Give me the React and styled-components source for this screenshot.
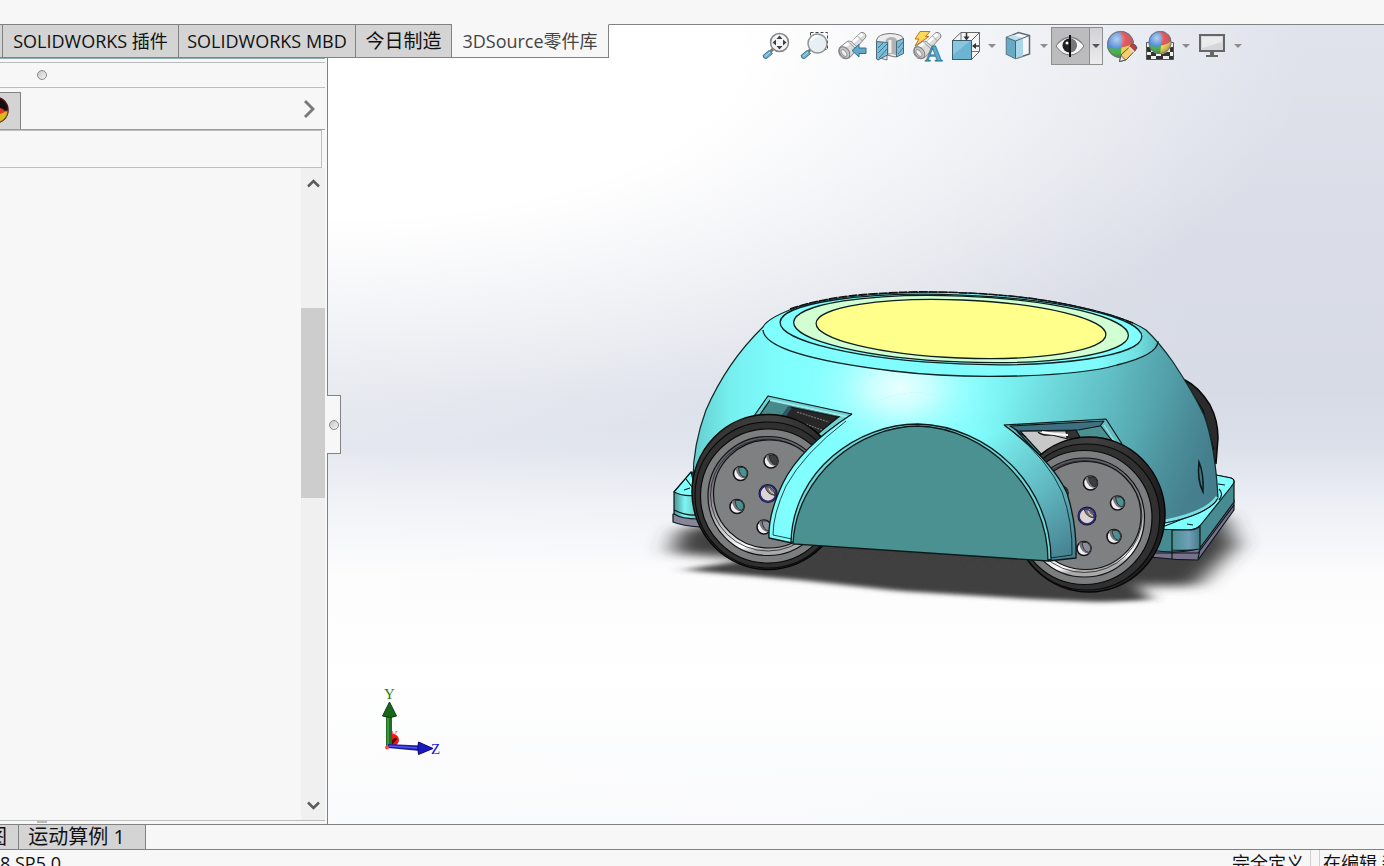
import React from 'react';
import styled, { createGlobalStyle } from 'styled-components';

const Global = createGlobalStyle`
  * { box-sizing: border-box; }
  body { margin: 0; background: #f7f7f7; overflow: hidden; }
  body, button { font-family: "Open Sans", "Noto Sans CJK SC", sans-serif; color: #111; }
  button { border: 0; padding: 0; background: none; cursor: pointer; }
  svg { display: block; }
`;

const Shell = styled.div`
  height: 100vh;
  display: grid;
  grid-template-rows: 24px minmax(0, 1fr) 26px 16px;
  overflow: hidden;
`;

const MenuStrip = styled.header`
  background: #f7f7f7;
`;

const Main = styled.main`
  display: grid;
  grid-template-columns: 328px minmax(0, 1fr);
  grid-template-rows: 34px minmax(0, 1fr);
  min-height: 0;
`;

/* ---------- command manager tabs ---------- */

const TabBar = styled.nav`
  grid-row: 1;
  grid-column: 1 / 3;
  justify-self: start;
  z-index: 2;
  display: flex;
`;

const Tab = styled.button`
  width: ${(p) => p.$width}px;
  border-style: solid;
  border-width: 1px 1px 1px 0;
  border-color: ${(p) => (p.$active ? '#f7f7f7' : '#828282')} #828282 #828282;
  background: ${(p) => (p.$active ? '#f7f7f7' : '#d4d4d4')};
  color: ${(p) => (p.$active ? '#444' : '#111')};
  font-size: ${(p) => (p.$large ? 19 : 18)}px;
  line-height: 32px;
  white-space: nowrap;
`;

/* ---------- side panel ---------- */

const Panel = styled.aside`
  grid-row: 2;
  grid-column: 1;
  display: flex;
  flex-direction: column;
  min-height: 0;
  padding-right: 2px;
  background: #f7f7f7;
  border-right: 1px solid #828282;
`;

const PanelTop = styled.div`
  height: 5px;
  border-top: 1px solid #8fb0b0;
  border-bottom: 1px solid #bdbdbd;
`;

const GripRow = styled.div`
  height: 25px;
  padding-left: 37px;
  display: flex;
  align-items: center;
  border-bottom: 1px solid #bdbdbd;
`;

const Grip = styled.span`
  width: 10px;
  height: 10px;
  border: 1px solid #8a8a8a;
  border-radius: 50%;
  background: linear-gradient(135deg, #c6c6c6, #f4f4f4);
`;

const ManagerTabs = styled.div`
  height: 42px;
  padding: 4px 10px 0 0;
  display: flex;
  justify-content: space-between;
  border-bottom: 1px solid #9c9c9c;
`;

const ManagerTab = styled.button`
  width: 21px;
  background: #d4d4d4;
  border: 1px solid #828282;
  border-width: 1px 1px 0 0;
  overflow: hidden;
`;

const FilterBox = styled.div`
  height: 38px;
  margin-right: 3px;
  border: 1px solid #bfbfbf;
  border-left: 0;
`;

const TreeArea = styled.div`
  flex: 1;
  min-height: 0;
  display: flex;
  justify-content: flex-end;
`;

const ScrollBar = styled.div`
  width: 24px;
  display: flex;
  flex-direction: column;
  background: #f0f0f0;
`;

const ScrollButton = styled.button`
  height: 30px;
  display: grid;
  place-items: center;
`;

const Track = styled.div`
  flex: 1;
  display: grid;
  grid-template-rows: 110fr 190fr 292fr;
`;

const Thumb = styled.div`
  grid-row: 2;
  background: #cdcdcd;
`;

const PanelBottom = styled.div`
  height: 4px;
  padding-left: 37px;
  border-top: 1px solid #bdbdbd;
`;

const BottomGrip = styled.div`
  width: 10px;
  height: 2px;
  background: #bcbcbc;
`;

/* ---------- graphics area ---------- */

const Canvas = styled.section`
  grid-row: 1 / 3;
  grid-column: 2;
  position: relative;
  display: grid;
  min-height: 0;
  border-top: 1px solid #828282;
  background:
    radial-gradient(ellipse 980px 390px at 0 30px, #fff 42%, rgba(255, 255, 255, 0.6) 66%, rgba(255, 255, 255, 0) 100%),
    linear-gradient(90deg, rgba(255, 255, 255, 0.25), rgba(255, 255, 255, 0) 85%),
    linear-gradient(180deg, #e0e3ec 0%, #dadde7 28%, #d7dbe6 46%, #dce0ea 53%, #edeff5 60%, #fcfcfd 69%, #ffffff 82%, #f8f9fb 100%);
`;

const Scene = styled.svg`
  grid-area: 1 / 1;
  width: 100%;
  height: 100%;
  min-height: 0;
`;

const ViewTools = styled.div`
  grid-area: 1 / 1;
  z-index: 1;
  align-self: start;
  justify-self: end;
  margin: 2px 139px 0 0;
  display: flex;
  height: 38px;
`;

const Tool = styled.button`
  width: 38px;
  height: 38px;
`;

const Caret = styled.button`
  width: 14px;
  display: grid;
  place-items: center;
  color: #8c8c8c;
`;

const PressedTool = styled.div`
  width: 52px;
  display: flex;
  border: 1px solid #8e8e8e;
  background: #bcbcbe;
  overflow: hidden;
  & > ${Tool} { height: 36px; border-right: 1px solid #8e8e8e; }
  & > ${Caret} { width: 12px; color: #555; background: linear-gradient(#d2d2d6, #ececef); }
`;

const Triad = styled.svg`
  grid-area: 1 / 1;
  align-self: end;
  justify-self: start;
  margin: 0 0 64px 50px;
`;

const FlyoutHandle = styled.button`
  position: absolute;
  left: -1px;
  top: 370px;
  width: 14px;
  height: 59px;
  display: grid;
  place-items: center;
  background: #f7f7f7;
  border: 1px solid #828282;
  border-left: 0;
`;

/* ---------- bottom bars ---------- */

const StudyBar = styled.nav`
  display: flex;
  border-top: 1px solid #828282;
  border-bottom: 1px solid #828282;
  background: #f7f7f7;
`;

const StudyTab = styled.button`
  display: flex;
  justify-content: flex-end;
  align-items: center;
  width: ${(p) => p.$width}px;
  padding-right: ${(p) => p.$pad}px;
  border-right: 1px solid #828282;
  background: #d4d4d4;
  font-size: 20px;
  line-height: 22px;
  white-space: nowrap;
  overflow: hidden;
`;

const StatusBar = styled.footer`
  display: flex;
  align-items: flex-start;
  overflow: hidden;
  background: #f7f7f7;
  font-size: 18px;
  line-height: 26px;
  white-space: nowrap;
`;

const Version = styled.span`
  flex: 1;
`;

const StatusCell = styled.span`
  flex: none;
  padding: ${(p) => (p.$last ? '0 0 0 3px' : '0 8px 0 0')};
  width: ${(p) => (p.$last ? 65 : 79)}px;
  margin-right: ${(p) => (p.$last ? 0 : 8)}px;
  border: 0 solid #cfcfcf;
  border-width: ${(p) => (p.$last ? '0 0 0 1px' : '0 1px 0 0')};
`;

/* ---------- icons ---------- */

const Icon = ({ x, children }) => (
  <svg width="38" height="38" viewBox={`${x} 27 38 38`} fill="none" aria-hidden="true">{children}</svg>
);

const CaretIcon = () => (
  <svg width="8" height="4" viewBox="0 0 8 4" aria-hidden="true"><path d="M0 0h8L4 4z" fill="currentColor" /></svg>
);

const Handle = ({ dx = 0 }) => (
  <g transform={`translate(${dx} 0)`}>
    <path d="M763 55.500 769 50.500 772.500 53.500 766.500 58.500Q763.500 59 763 55.500Z" fill="#6fb0cc" stroke="#3b7089" />
    <path d="M765 56.500 770 52" stroke="#b9e0ee" />
    <path d="m770.500 51.500 3-3" stroke="#777" strokeWidth="3" />
  </g>
);

const Tube = ({ dx = 0 }) => (
  <g transform={`translate(${dx} 0)`}>
    <path d="M839.500 47.500 848 41 851.500 41.500 861 32.500Q866 32 866 37L857 47 856.500 50 850 57.500Q846 60 842.500 58 837 54 839.500 47.500Z" fill="#dcdcdc" stroke="#858585" />
    <path d="m844 46.500 6-4M853 42l9.500-8" stroke="#fff" strokeWidth="3" />
    <path d="m848 41.500 8.500 8M851.500 42l6 5M857.500 36l5 5" stroke="#999" />
    <ellipse cx="844.500" cy="52.500" rx="4.500" ry="6.500" transform="rotate(-38 844.500 52.500)" fill="#c6c6c6" stroke="#7d7d7d" />
    <ellipse cx="844" cy="53" rx="2" ry="4" transform="rotate(-38 844 53)" fill="#f0f0f0" stroke="#949494" />
  </g>
);

const Ball = ({ id, cx, cy, r }) => (
  <g>
    <defs>
      <clipPath id={`${id}-clip`}><circle cx={cx} cy={cy} r={r} /></clipPath>
      <radialGradient id={`${id}-shade`} cx="0.35" cy="0.3" r="0.75">
        <stop offset="0" stopColor="#fff" stopOpacity="0.6" />
        <stop offset="0.5" stopColor="#fff" stopOpacity="0.05" />
        <stop offset="1" stopColor="#000" stopOpacity="0.3" />
      </radialGradient>
    </defs>
    <g clipPath={`url(#${id}-clip)`}>
      <rect x={cx - r} y={cy - r} width={2 * r} height={2 * r} fill="#4a88d8" />
      <path d={`M${cx - 1} ${cy - r}Q${cx + 3} ${cy - 6} ${cx + 1} ${cy + 3}L${cx + r} ${cy + 2}V${cy - r}Z`} fill="#dc4d52" />
      <path d={`M${cx - r} ${cy + 2}Q${cx - 5} ${cy + 6} ${cx + 1} ${cy + 3}L${cx + 1} ${cy + r}H${cx - r}Z`} fill="#3fac42" />
      <path d={`M${cx + 1} ${cy + 3}Q${cx + 8} ${cy + 2} ${cx + r} ${cy - 2}V${cy + r}H${cx}Z`} fill="#f0d14c" />
    </g>
    <circle cx={cx} cy={cy} r={r - 0.5} fill={`url(#${id}-shade)`} stroke="#77757c" />
  </g>
);

const ZoomFitIcon = () => (
  <Icon x={757}>
    <Handle />
    <circle cx="779.500" cy="42.500" r="9" fill="#f3f5f6" stroke="#858585" strokeWidth="1.500" />
    <path d="m779.500 35.500 3 3.500h-6zM779.500 49.500l3-3.500h-6zM772.500 42.500l3.500-3v6zM786.500 42.500l-3.500-3v6z" fill="#404040" />
  </Icon>
);

const ZoomAreaIcon = () => (
  <Icon x={795}>
    <path d="M810.500 32.500h17v17h-17z" stroke="#444" strokeDasharray="3 2" />
    <Handle dx={38} />
    <circle cx="817.500" cy="43.500" r="9.500" fill="#e6eff3" stroke="#929292" strokeWidth="1.500" />
    <path d="M811 41a7 7 0 0 1 7-5" stroke="#fff" strokeWidth="2" />
  </Icon>
);

const PreviousViewIcon = () => (
  <Icon x={833}>
    <Tube />
    <path d="M852 50.500 859 44.500v3.500h7v5.500h-7V57z" fill="#62a9c9" stroke="#32708c" />
  </Icon>
);

const SectionIcon = () => (
  <Icon x={871}>
    <path d="M876.500 40Q878 34 890 33.500 902 34 903.500 38.500L903.500 53 895 57 887 55 887 60 876.500 57Z" fill="#ececec" stroke="#777" />
    <path d="M887 43Q884 39 890 37.500 896 37 897 41V55Q891 52 887 55Z" fill="#b2b2b2" stroke="#999" strokeWidth=".5" />
    <path d="M890 40v13" stroke="#f0f0f0" strokeWidth="3" />
    <path d="M876.500 41.500 887.500 42.500V55L878 60 876.500 59Z" fill="#7cbcd8" stroke="#4a6878" />
    <path d="M896.500 41.500 903.500 38.500V53.500L896.500 57Z" fill="#7cbcd8" stroke="#4a6878" />
    <path d="m878 48 5-5M878 53l9-9M879 58l8-9M898 48l5-6M898 54l5-6" stroke="#3b7894" />
  </Icon>
);

const AnnotationViewIcon = () => (
  <Icon x={909}>
    <Tube dx={75} />
    <path d="M920 31.500h10l-4.500 5h3.500L915 46l4-7h-4z" fill="#ffd95c" stroke="#c5702a" />
    <text x="925" y="61" fontFamily="Liberation Serif, serif" fontWeight="700" fontSize="24" fill="#5fabcb" stroke="#2f7698" strokeWidth="0.800">A</text>
  </Icon>
);

const OrientationIcon = () => (
  <Icon x={947}>
    <path d="M952.500 40.500 961 32.500H979.500L971.500 40.500ZM971.500 59.500 979.500 51.500V32.500L971.500 40.500Z" fill="#f4f5f8" stroke="#666" />
    <path d="M961 32.500v8M972 51.500h8" stroke="#777" />
    <rect x="952.500" y="40.500" width="19" height="19" fill="#6db4d2" stroke="#3b5c6a" />
    <path d="m953 41 17 0-17 14z" fill="#9bd3e7" opacity=".6" />
    <path d="M966.500 33v5M979 46h-4" stroke="#333" strokeWidth="1.500" />
    <path d="M963.500 36.500h6l-3 4zM976 43v6l-4-3z" fill="#333" />
  </Icon>
);

const DisplayStyleIcon = () => (
  <Icon x={999}>
    <path d="M1006.500 37.500 1018.500 32.500 1029.500 35.500V54L1015.500 58.500 1006.500 54Z" fill="#f4f6f8" stroke="#5b6a72" strokeWidth="1.500" />
    <path d="M1006.500 37.500 1015.500 41V58.500L1006.500 54Z" fill="#68a9c5" />
    <path d="m1006.500 37.500 6-2.500 10 3-7 3z" fill="#b8e0ed" />
    <path d="M1015.500 41 1023 39V56L1015.500 58.500Z" fill="#a9d7e8" />
    <path d="M1006.500 37.500 1015.500 41 1029.500 35.500M1015.500 41V58.500" stroke="#47616d" />
  </Icon>
);

const EyeIcon = () => (
  <svg width="38" height="36" viewBox="1052 28 38 36" fill="none" aria-hidden="true">
    <path d="M1056 46Q1062 37 1070 37T1084 46Q1078 55 1070 55T1056 46Z" fill="#f5f5f5" stroke="#777" />
    <path d="M1058 43Q1070 32 1082 43" stroke="#888" strokeWidth="1.500" />
    <circle cx="1069.500" cy="45.500" r="7" fill="#222" />
    <path d="M1070 38.500a7 7 0 0 1 0 14z" fill="#777" />
    <circle cx="1067" cy="43" r="1.500" fill="#fff" />
    <path d="M1070 35v22" stroke="#111" strokeWidth="2" />
  </svg>
);

const AppearanceIcon = () => (
  <Icon x={1103}>
    <Ball id="appearance" cx={1120.500} cy={44.500} r={13.500} />
    <path d="M1119.500 61.500 1121 55 1130.500 46 1135 50.500 1126 60Z" fill="#f3cf70" stroke="#6c5226" />
    <path d="m1119.500 61.500 1.500-6 4.500 4.500z" fill="#eee" stroke="#555" />
    <path d="m1129 47 3-3q4 0 5 4l-3 4z" fill="#bc4038" stroke="#555" />
    <path d="m1129 47 5 5" stroke="#ddd" strokeWidth="2" />
  </Icon>
);

const SceneIcon = () => (
  <Icon x={1141}>
    <path d="M1146.500 42.500h27v17h-27z" fill="#333" stroke="#555" />
    <path d="M1147 43h6v4h-6zM1167 43h6v4h-6zM1151 48h5v4h-5zM1165 48h5v4h-5zM1147 52h4v3h-4zM1156 53h5v3h-5zM1170 52h3v4h-3zM1151 56h5v3h-5zM1163 56h6v3h-6z" fill="#f0f0f0" />
    <Ball id="backdrop" cx={1160} cy={42.500} r={11.500} />
  </Icon>
);

const MonitorIcon = () => (
  <Icon x={1193}>
    <rect x="1200" y="35" width="24" height="16" fill="#d6d7da" stroke="#666" strokeWidth="2" />
    <path d="M1202 37h20v5l-20 6z" fill="#f3f3f5" opacity=".7" />
    <path d="M1210 52h4v3h4v2h-12v-2h4z" fill="#666" />
  </Icon>
);

/* ---------- 3D model ---------- */

const bodyOutline = 'M763 327Q768 317 803 305 850 293 933 292 1015 293 1070 305 1125 316 1146 330 1158 341 1173 362 1193 392 1204 415 1215 445 1218 497 1214 512 1165 522L1070 540 780 540 693 480Q693 445 706 410 727 362 763 327Z';
const archOutline = 'M852 414Q800 448 783 483 768 514 769 538L792 543 1048 561 1076 558Q1077 525 1067 493 1052 460 1004 425 965 395 915 392 875 397 852 414Z';
const crownEdge = 'M763 330C764 347 810 361 893 371S1080 376 1117 365C1150 357 1158 348 1158 341';

const BodySurface = () => (
  <g>
    <path d={bodyOutline} fill="url(#body)" />
    <path d={bodyOutline} fill="url(#lower)" />
    <ellipse cx="900" cy="388" rx="118" ry="84" fill="url(#shine)" />
  </g>
);

const Hole = ({ x, y, inner = '#4b9191' }) => (
  <g>
    <circle cx={x} cy={y} r="7" fill="#f2edf3" stroke="#151515" strokeWidth="1.600" />
    <path d={`M${x - 5} ${y - 5}Q${x - 3} ${y + 5} ${x + 5} ${y + 5}Q${x + 10} ${y - 2} ${x + 3} ${y - 6}Q${x - 2} ${y - 8} ${x - 5} ${y - 5}Z`} fill="#77747c" />
    <path d={`M${x - 2} ${y - 6}Q${x - 1} ${y + 3} ${x + 5} ${y + 4}Q${x + 9} ${y - 2} ${x + 3} ${y - 6}Z`} fill={inner} stroke="#222" strokeWidth="0.800" />
  </g>
);

const Hub = ({ x, y }) => (
  <g>
    <circle cx={x} cy={y} r="8.500" fill="#ddd3d2" stroke="#111" strokeWidth="2" />
    <path d={`M${x - 3} ${y - 7}Q${x - 1} ${y + 1} ${x + 7} ${y + 2}Q${x + 7} ${y - 7} ${x - 3} ${y - 7}Z`} fill="#77706f" stroke="#222" strokeWidth="0.800" />
    <path d={`M${x + 1} ${y - 5}q1 4 5 5`} stroke="#ddd" fill="none" />
    <circle cx={x} cy={y} r="8" fill="none" stroke="#2c2e86" strokeWidth="1.600" />
  </g>
);

const Wheel = ({ x, y, tx, ty }) => (
  <g>
    <ellipse cx={tx} cy={ty} rx="76" ry="77.500" fill="url(#tire)" stroke="#050505" strokeWidth="1.500" />
    <ellipse cx={(x + tx) / 2} cy={(y + ty) / 2 + 1} rx="73" ry="73" fill="#303030" stroke="#0a0a0a" strokeWidth="1.200" />
    <ellipse cx={x} cy={y} rx="67.500" ry="67" fill="#7c7d7f" stroke="#0a0a0a" strokeWidth="1.200" />
    <ellipse cx={x} cy={y} rx="60" ry="59.500" fill="url(#rim)" stroke="#111" strokeWidth="1.200" />
    <ellipse cx={x} cy={y - 1} rx="57.500" ry="56" fill="none" stroke="#222" strokeWidth="0.800" />
    <ellipse cx={x + 1} cy={y - 2} rx="55.500" ry="54" fill="#7f8082" stroke="#111" strokeWidth="1.200" />
  </g>
);

const Robot = () => (
  <Scene viewBox="328 25 1056 799" preserveAspectRatio="xMidYMid meet" fill="none" role="img" aria-label="Robot assembly">
    <defs>
      <linearGradient id="body" x1="692" y1="0" x2="1218" y2="0" gradientUnits="userSpaceOnUse">
        <stop offset="0" stopColor="#64cccd" />
        <stop offset="0.070" stopColor="#76eeee" />
        <stop offset="0.180" stopColor="#80ffff" />
        <stop offset="0.520" stopColor="#80fdfd" />
        <stop offset="0.640" stopColor="#76e9ea" />
        <stop offset="0.800" stopColor="#67cfd2" />
        <stop offset="0.920" stopColor="#58b0b6" />
        <stop offset="1" stopColor="#4b929b" />
      </linearGradient>
      <linearGradient id="lower" x1="1020" y1="380" x2="1190" y2="500" gradientUnits="userSpaceOnUse">
        <stop offset="0" stopColor="#487f8c" stopOpacity="0" />
        <stop offset="0.600" stopColor="#437888" stopOpacity="0.350" />
        <stop offset="1" stopColor="#437888" stopOpacity="0.850" />
      </linearGradient>
      <linearGradient id="archShade" x1="1000" y1="430" x2="1068" y2="555" gradientUnits="userSpaceOnUse">
        <stop offset="0" stopColor="#4a8595" stopOpacity="0" />
        <stop offset="0.500" stopColor="#4a8595" stopOpacity="0.450" />
        <stop offset="1" stopColor="#457d8e" stopOpacity="0.950" />
      </linearGradient>
      <radialGradient id="shine">
        <stop offset="0" stopColor="#eaffff" />
        <stop offset="0.250" stopColor="#d6ffff" stopOpacity="0.850" />
        <stop offset="0.600" stopColor="#a8ffff" stopOpacity="0.400" />
        <stop offset="1" stopColor="#80ffff" stopOpacity="0" />
      </radialGradient>
      <linearGradient id="crown" x1="764" y1="0" x2="1158" y2="0" gradientUnits="userSpaceOnUse">
        <stop offset="0" stopColor="#80ffff" />
        <stop offset="0.850" stopColor="#80fbfb" />
        <stop offset="0.950" stopColor="#70dfe1" />
        <stop offset="1" stopColor="#5dbcc2" />
      </linearGradient>
      <linearGradient id="tire" x1="0" y1="0" x2="1" y2="0.300">
        <stop offset="0" stopColor="#303030" />
        <stop offset="0.500" stopColor="#404040" />
        <stop offset="1" stopColor="#1e1e20" />
      </linearGradient>
      <linearGradient id="rim" x1="0" y1="0" x2="0.200" y2="1">
        <stop offset="0" stopColor="#4f4e57" />
        <stop offset="0.500" stopColor="#88858e" />
        <stop offset="0.850" stopColor="#d8d8da" />
        <stop offset="0.950" stopColor="#ffffff" />
        <stop offset="1" stopColor="#aaaaaa" />
      </linearGradient>
      <linearGradient id="foot" x1="674" y1="0" x2="698" y2="0" gradientUnits="userSpaceOnUse">
        <stop offset="0" stopColor="#4a9292" />
        <stop offset="0.450" stopColor="#80f4f4" />
        <stop offset="1" stopColor="#5cc0c0" />
      </linearGradient>
      <linearGradient id="corner" x1="1172" y1="0" x2="1200" y2="0" gradientUnits="userSpaceOnUse">
        <stop offset="0" stopColor="#498f92" />
        <stop offset="0.600" stopColor="#6f9fb6" />
        <stop offset="1" stopColor="#437c86" />
      </linearGradient>
      <clipPath id="bodyClip"><path d={bodyOutline} /></clipPath>
      <clipPath id="archClip"><path d={archOutline} /></clipPath>
      <filter id="soft" x="-15%" y="-60%" width="130%" height="220%"><feGaussianBlur stdDeviation="13 5" /></filter>
      <filter id="edge" x="-10%" y="-40%" width="120%" height="180%"><feGaussianBlur stdDeviation="9 2" /></filter>
    </defs>

    <path d="M680 530 760 515H1222L1236 545 1196 586 1120 586 760 560 672 553Z" fill="#404040" filter="url(#soft)" />
    <path d="M684 570 770 556 840 552 1130 575 1150 600 1100 602 1030 599 900 591 800 580Z" fill="#3f3f3f" filter="url(#edge)" />

    <path d="M1185 380Q1199 387 1210 405 1218 420 1218 438L1216 464 1208 440Z" fill="#2b2a2d" stroke="#080808" strokeWidth="1.500" />
    <path d="M1187 385 1203 410 1214 450" stroke="#050505" />

    <g stroke="#0b1718" strokeWidth="1.200" strokeLinejoin="round">
      <path d="M673 514V522Q683 526 700 527L698 514Z" fill="#85859b" />
      <path d="M674 492 692 472 700 492 698 519Q682 519 674 514Z" fill="url(#foot)" />
      <path d="M674 492 691 472 697 495Q684 497 674 492Z" fill="#80ffff" />
      <path d="m684 490 6-2M686 479l6 8M674 510q12 6 24 5" />
      <path d="M1234 500V510L1198 560Q1174 560 1150 557V545L1198 548Z" fill="#77718d" />
      <path d="M1216 475 1231 478Q1235 480 1234 484V502L1200 548Q1180 555 1150 550V524Z" fill="#468a92" />
      <path d="M1216 475 1231 478Q1237 480 1231 487L1203 522Q1198 530 1188 530L1150 529V520Z" fill="#80ffff" />
      <path d="M1172 530H1188Q1196 530 1200 526V549Q1188 551 1172 550Z" fill="url(#corner)" />
      <path d="M1150 553 1198 553 1234 505M1172 550v9M1200 549l-2 10" />
      <path d="m1187 524 6 1M1218 484l7 1M1219 489q5 5 0 11M1190 514l18-8M1165 526l40-16" />
    </g>

    <BodySurface />
    <path d={`${crownEdge}L1150 300 940 280 760 300Z`} fill="url(#crown)" clipPath="url(#bodyClip)" />
    <path d={crownEdge} stroke="#0d2021" strokeWidth="1.300" />
    <path d={bodyOutline} stroke="#10292b" strokeWidth="1.200" />
    <path d="M790 309Q825 297 870 294T933 292Q1010 293 1065 304 1105 312 1133 323" stroke="#111" strokeWidth="1.500" strokeDasharray="9 1" />
    <g transform="rotate(2.300 961 329)" stroke="#0f1e1f" strokeWidth="1.300">
      <ellipse cx="961" cy="329.500" rx="181" ry="34.500" fill="#80ffff" />
      <ellipse cx="961" cy="329" rx="167.500" ry="33" fill="#d2ffd2" />
      <ellipse cx="961" cy="329" rx="145" ry="29" fill="#ffff8c" />
    </g>
    <path d="M1199 462Q1204 474 1203 492Q1197 480 1199 462Z" fill="#3f7480" stroke="#0b1718" strokeWidth="1.500" />
    <path d="M1165 521Q1206 513 1217 497" stroke="#78dfe2" strokeWidth="3" />
    <path d="M1165 523Q1208 515 1218 498" stroke="#0b1718" />

    <g stroke="#0b1718" strokeWidth="1.200" strokeLinejoin="round">
      <path d="M754 416 768 396 852 414 800 452Z" fill="#6fd2d3" />
      <path d="M759 416 770 400 840 416 800 446Z" fill="#468a8c" />
      <path d="M790 407 838 417 806 444 780 420Z" fill="#272727" />
      <path d="m792 419 30 11M797 412l32 10" stroke="#777" strokeDasharray="2 1" />
      <path d="m790 407-7 10" stroke="#2d5666" strokeWidth="4" />
      <path d="M770 400 848 417" stroke="#9debed" strokeWidth="2" />
      <path d="M1004 425 1106 419 1122 444 1050 470Z" fill="#66bcc0" />
      <path d="M1015 429 1100 425 1116 446 1044 460Z" fill="#4b9191" />
      <path d="M1020 431H1070L1080 446 1043 456Z" fill="#c8c8c8" />
      <path d="M1010 426 1104 421 1100 426 1078 430 1018 431Z" fill="#3e7083" />
      <path d="m1066 431 10-1 5 9-14-1z" fill="#333" />
      <path d="M1038 432q4 4 14 3l16 4M1018 432l8 5" stroke="#111" />
      <path d="m1042 432 12 2 14 1" stroke="#fff" strokeWidth="2" />
      <path d="m1104 425 13 20" stroke="#8ce9ea" />
    </g>

    <Wheel x={768} y={496} tx={768} ty={492} />
    <Hole x={771} y={461} inner="#3b3e3e" />
    <Hole x={740.500} y={473.500} />
    <Hole x={737} y={506.500} />
    <Hole x={764} y={527} inner="#8c8c9b" />
    <Hub x={768} y={493.500} />

    <Wheel x={1084.500} y={517.500} tx={1089} ty={514.500} />
    <Hole x={1061} y={493} inner="#555" />
    <Hole x={1090.500} y={483} inner="#3b3e3e" />
    <Hole x={1117.500} y={503} />
    <Hole x={1114} y={536.500} />
    <Hole x={1084} y={548.500} inner="#8c8c9b" />
    <Hub x={1087} y={516} />

    <g clipPath="url(#archClip)">
      <path d={archOutline} fill="#80f6f6" />
      <BodySurface />
      <path d="M1000 425 1076 440V565H1040Z" fill="#57a0a8" />
      <path d={archOutline} fill="url(#body)" />
      <path d={archOutline} fill="url(#archShade)" />
      <ellipse cx="900" cy="388" rx="118" ry="84" fill="url(#shine)" />
    </g>
    <g stroke="#0b1718" strokeWidth="1.300" strokeLinejoin="round">
      <path d="M852 414Q800 448 783 483 768 514 769 538L792 543M1048 561 1076 558Q1077 525 1067 493 1052 460 1004 425" />
      <path d="M846 421Q804 453 786 486 773 514 773 535L792 539M1050 558 1072 555Q1073 522 1062 492 1048 460 1012 431" strokeWidth=".8" />
    </g>
    <path d="M791 542C793 470 858 424 918 424 989 426 1051 485 1051 560Z" fill="#6fd6d7" stroke="#0b1718" strokeWidth="1.300" />
    <path d="M793 544C796 474 861 426 918 426 986 428 1048 488 1048 561Z" fill="#4b9191" stroke="#0b1718" strokeWidth="1.300" />
  </Scene>
);

const AxisTriad = () => (
  <Triad width="72" height="80" viewBox="378 680 72 80" fill="none" role="img" aria-label="Axes">
    <circle cx="393" cy="740" r="6" fill="#e81818" />
    <path d="M389 746 396 738" stroke="#5c0505" strokeWidth="3" />
    <text x="390" y="738" fontFamily="Liberation Serif, serif" fontSize="11" fill="#f22">Y</text>
    <rect x="386" y="714" width="6" height="33" fill="#1f6d22" />
    <path d="M388 715v31" stroke="#47a449" strokeWidth="1.500" />
    <path d="M389.500 702 396.500 716Q390 719 382.500 716Z" fill="#17661b" stroke="#0c3f0e" />
    <path d="M388 744 420 745.500V751L388 748Z" fill="#1d1da8" />
    <path d="m389 746 30 2" stroke="#5555ee" strokeWidth="1.500" />
    <path d="M418.500 742 433 748.500 418.500 754.500Q417 748 418.500 742Z" fill="#1919bd" stroke="#0a0a70" />
    <circle cx="387" cy="747.500" r="2" fill="#ff4848" />
    <text x="384" y="699" fontFamily="Liberation Serif, serif" fontSize="15" fill="#148014">Y</text>
    <text x="431" y="754" fontFamily="Liberation Serif, serif" fontSize="15" fill="#1515e0">Z</text>
  </Triad>
);

const ManagerIcon = () => (
  <svg width="20" height="36" viewBox="0 92 20 36" fill="none" aria-hidden="true">
    <circle cx="-5" cy="109" r="13" fill="#111" stroke="#5a1015" strokeWidth="1.500" />
    <path d="M-5 110H8A13 13 0 0 1-5 122Z" fill="#dfb91c" stroke="#6b5810" />
    <path d="m0 107 3 1 2 3-5 2z" fill="#e53528" />
  </svg>
);

const SmallChevron = ({ d }) => (
  <svg width="13" height="9" viewBox="0 0 13 9" fill="none" aria-hidden="true">
    <path d={d} stroke="#5c5c5c" strokeWidth="2.500" />
  </svg>
);

const commandTabs = [
  { label: 'SOLIDWORKS 插件', width: 176 },
  { label: 'SOLIDWORKS MBD', width: 177 },
  { label: '今日制造', width: 96, large: true },
  { label: '3DSource零件库', width: 157, active: true },
];

const viewTools = [
  { label: '整屏显示全图', Drawing: ZoomFitIcon },
  { label: '局部放大', Drawing: ZoomAreaIcon },
  { label: '上一视图', Drawing: PreviousViewIcon },
  { label: '剖面视图', Drawing: SectionIcon },
  { label: '动态注解视图', Drawing: AnnotationViewIcon },
  { label: '视图定向', Drawing: OrientationIcon, menu: true },
  { label: '显示样式', Drawing: DisplayStyleIcon, menu: true },
  { label: '隐藏/显示项目', Drawing: EyeIcon, menu: true, pressed: true },
  { label: '编辑外观', Drawing: AppearanceIcon },
  { label: '应用布景', Drawing: SceneIcon, menu: true },
  { label: '视图设定', Drawing: MonitorIcon, menu: true },
];

const ViewTool = ({ label, Drawing, menu, pressed }) => {
  const parts = (
    <>
      <Tool aria-label={label} aria-pressed={pressed}><Drawing /></Tool>
      {menu && <Caret aria-label={`${label}菜单`}><CaretIcon /></Caret>}
    </>
  );
  return pressed ? <PressedTool>{parts}</PressedTool> : parts;
};

export default function App() {
  return (
    <>
      <Global />
      <Shell>
        <MenuStrip />
        <Main>
          <TabBar>
            <Tab $width={3} aria-label="上一个选项卡" />
            {commandTabs.map((t) => (
              <Tab key={t.label} $width={t.width} $active={t.active} $large={t.large}>{t.label}</Tab>
            ))}
          </TabBar>
          <Panel>
            <PanelTop />
            <GripRow><Grip /></GripRow>
            <ManagerTabs>
              <ManagerTab aria-label="外观管理"><ManagerIcon /></ManagerTab>
              <button aria-label="更多">
                <svg width="12" height="36" viewBox="303 92 12 36" fill="none" aria-hidden="true">
                  <path d="m305 100 8 8-8 8" stroke="#7a7a7a" strokeWidth="3" />
                </svg>
              </button>
            </ManagerTabs>
            <FilterBox />
            <TreeArea>
              <ScrollBar>
                <ScrollButton aria-label="向上滚动"><SmallChevron d="m1 7.500 5.500-5.500 5.500 5.500" /></ScrollButton>
                <Track><Thumb /></Track>
                <ScrollButton aria-label="向下滚动"><SmallChevron d="m1 1.500 5.500 5.500 5.500-5.500" /></ScrollButton>
              </ScrollBar>
            </TreeArea>
            <PanelBottom><BottomGrip /></PanelBottom>
          </Panel>
          <Canvas>
            <Robot />
            <AxisTriad />
            <ViewTools>
              {viewTools.map((t) => <ViewTool key={t.label} {...t} />)}
            </ViewTools>
            <FlyoutHandle aria-label="折叠面板"><Grip /></FlyoutHandle>
          </Canvas>
        </Main>
        <StudyBar>
          <StudyTab $width={19} $pad={11}>图</StudyTab>
          <StudyTab $width={127} $pad={20}>运动算例 1</StudyTab>
        </StudyBar>
        <StatusBar>
          <Version>8 SP5.0</Version>
          <StatusCell>完全定义</StatusCell>
          <StatusCell $last>在编辑 装配体</StatusCell>
        </StatusBar>
      </Shell>
    </>
  );
}
